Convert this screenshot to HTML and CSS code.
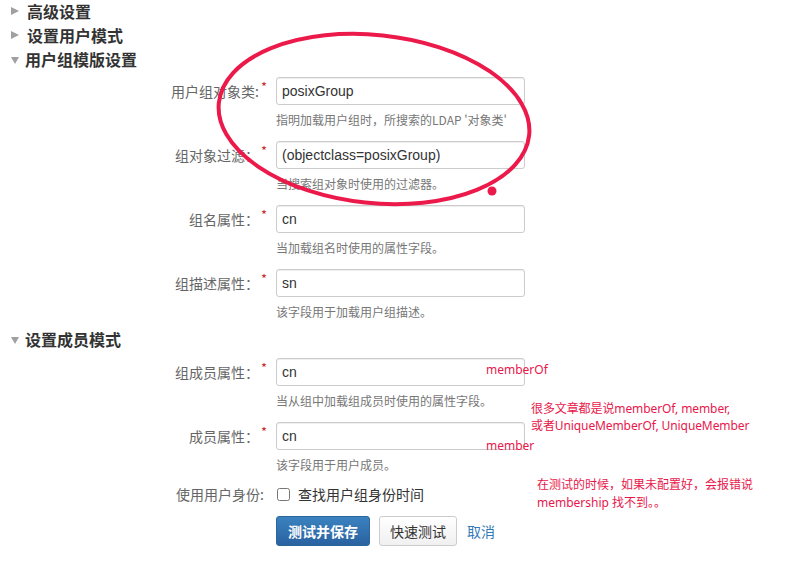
FILE: index.html
```html
<!DOCTYPE html>
<html lang="zh">
<head>
<meta charset="utf-8">
<title>LDAP 用户组设置</title>
<link rel="stylesheet" href="styles.css">
</head>
<body>
<div class="page">
  <div class="section collapsed"><span class="tri"></span>高级设置</div>
  <div class="section collapsed"><span class="tri"></span>设置用户模式</div>
  <div class="section open"><span class="tri"></span>用户组模版设置</div>

  <div class="form">
    <div class="row">
      <label class="lbl">用户组对象类:<span class="req">*</span></label>
      <div class="field">
        <input class="inp" type="text" value="posixGroup">
        <div class="help">指明加载用户组时，所搜索的LDAP '对象类'</div>
      </div>
    </div>
    <div class="row">
      <label class="lbl">组对象过滤：<span class="req">*</span></label>
      <div class="field">
        <input class="inp" type="text" value="(objectclass=posixGroup)">
        <div class="help">当搜索组对象时使用的过滤器。</div>
      </div>
    </div>
    <div class="row">
      <label class="lbl">组名属性：<span class="req">*</span></label>
      <div class="field">
        <input class="inp" type="text" value="cn">
        <div class="help">当加载组名时使用的属性字段。</div>
      </div>
    </div>
    <div class="row">
      <label class="lbl">组描述属性：<span class="req">*</span></label>
      <div class="field">
        <input class="inp" type="text" value="sn">
        <div class="help">该字段用于加载用户组描述。</div>
      </div>
    </div>
  </div>

  <div class="section open mid"><span class="tri"></span>设置成员模式</div>

  <div class="form">
    <div class="row">
      <label class="lbl">组成员属性：<span class="req">*</span></label>
      <div class="field">
        <input class="inp" type="text" value="cn">
        <div class="help">当从组中加载组成员时使用的属性字段。</div>
      </div>
    </div>
    <div class="row">
      <label class="lbl">成员属性：<span class="req">*</span></label>
      <div class="field">
        <input class="inp" type="text" value="cn">
        <div class="help">该字段用于用户成员。</div>
      </div>
    </div>
    <div class="row check-row">
      <label class="lbl plain">使用用户身份:</label>
      <div class="field">
        <label class="check"><input type="checkbox" class="cb"> 查找用户组身份时间</label>
      </div>
    </div>
    <div class="row btn-row">
      <div class="lbl"></div>
      <div class="field buttons">
        <button class="btn primary">测试并保存</button>
        <button class="btn default">快速测试</button>
        <a class="cancel" href="#">取消</a>
      </div>
    </div>
  </div>

  <svg class="mark" width="786" height="577" viewBox="0 0 786 577">
    <ellipse cx="374" cy="119" rx="156" ry="84" transform="rotate(6 374 119)" fill="none" stroke="#ec1a4a" stroke-width="4"/>
    <circle cx="492" cy="191" r="4.5" fill="#ec1a4a"/>
  </svg>
  <div class="note n1">memberOf</div>
  <div class="note n2">很多文章都是说memberOf, member,<br>或者UniqueMemberOf, UniqueMember</div>
  <div class="note n3">member</div>
  <div class="note n4">在测试的时候，如果未配置好，会报错说<br>membership 找不到。。</div>
</div>
</body>
</html>
```

FILE: styles.css
```css
html, body {
  margin: 0;
  padding: 0;
  background: #fff;
}
body {
  font-family: "Noto Sans", "Noto Sans CJK SC", "Liberation Sans", sans-serif;
  color: #333;
  font-size: 14px;
}
.page {
  position: relative;
  width: 786px;
  height: 577px;
  overflow: hidden;
}
.section {
  display: flex;
  align-items: center;
  height: 22px;
  margin-bottom: 2px;
  padding-left: 11px;
  font-family: "Noto Sans CJK SC", sans-serif;
  font-weight: 700;
  font-size: 16px;
  color: #333;
  line-height: 22px;
}
.section .tri {
  display: inline-block;
  width: 0;
  height: 0;
  margin-right: 8px;
}
.section.collapsed .tri {
  border-top: 4.5px solid transparent;
  border-bottom: 4.5px solid transparent;
  border-left: 8px solid #a0a0a0;
}
.section.open .tri {
  border-left: 4.5px solid transparent;
  border-right: 4.5px solid transparent;
  border-top: 7px solid #a0a0a0;
  margin-top: 2px;
  margin-right: 6px;
}
.section.mid {
  margin-top: 8px;
  margin-bottom: 0;
}
.form {
  margin-top: 7px;
}
.section.mid + .form {
  margin-top: 8px;
}
.row {
  display: flex;
  align-items: flex-start;
  margin-bottom: 13px;
}
.row:last-child {
  margin-bottom: 0;
}
.lbl {
  width: 267px;
  flex: none;
  text-align: right;
  font-family: "Noto Sans CJK SC", sans-serif;
  font-size: 14px;
  color: #666;
  line-height: 28px;
  box-sizing: border-box;
}
.lbl.plain {
  padding-right: 3px;
  line-height: 20px;
}
.req {
  color: #c9302c;
  font-size: 13px;
  position: relative;
  top: -5px;
  margin-left: 2px;
}
.field {
  margin-left: 9px;
}
.inp {
  display: block;
  width: 249px;
  height: 28px;
  box-sizing: border-box;
  border: 1px solid #ccc;
  border-radius: 3px;
  box-shadow: inset 0 1px 1px rgba(0,0,0,0.075);
  padding: 0 5px;
  font-family: "Liberation Sans", "Noto Sans", sans-serif;
  font-size: 14px;
  color: #333;
  margin: 0;
  outline: none;
}
.help {
  margin-top: 6px;
  font-family: "Noto Sans CJK SC", sans-serif;
  font-size: 12px;
  line-height: 17px;
  color: #777;
  white-space: nowrap;
}
.check-row {
  margin-top: -2px;
  margin-bottom: 12px;
}
.check {
  display: flex;
  align-items: center;
  font-family: "Noto Sans CJK SC", sans-serif;
  font-size: 14px;
  color: #333;
  line-height: 20px;
}
.cb {
  width: 13px;
  height: 13px;
  margin: 0 8px 0 1px;
}
.buttons {
  display: flex;
  align-items: center;
  gap: 9px;
}
.btn {
  font-family: "Noto Sans CJK SC", sans-serif;
  font-size: 14px;
  height: 30px;
  padding: 0 12px;
  border-radius: 3px;
  line-height: 28px;
  white-space: nowrap;
  cursor: pointer;
}
.btn.primary {
  color: #fff;
  font-weight: 700;
  border: 1px solid #2b669a;
  background: linear-gradient(#3b82c0, #2a62a0);
  padding: 0 11px;
}
.btn.default {
  color: #333;
  border: 1px solid #ccc;
  background: linear-gradient(#fff, #f0f0f0);
  padding: 0 10px;
}
.cancel {
  color: #337ab7;
  text-decoration: none;
  font-family: "Noto Sans CJK SC", sans-serif;
  font-size: 14px;
  margin-left: 1px;
}
.mark {
  position: absolute;
  left: 0;
  top: 0;
  pointer-events: none;
}
.note {
  position: absolute;
  font-family: "Noto Sans", "Noto Sans CJK SC", sans-serif;
  font-size: 12px;
  line-height: 17px;
  color: #e8174b;
  white-space: nowrap;
}
.n1 { left: 486px; top: 361px; }
.n2 { left: 531px; top: 400px; letter-spacing: -0.1px; }
.n3 { left: 486px; top: 437px; }
.n4 { left: 537px; top: 476px; line-height: 18px; }
```
